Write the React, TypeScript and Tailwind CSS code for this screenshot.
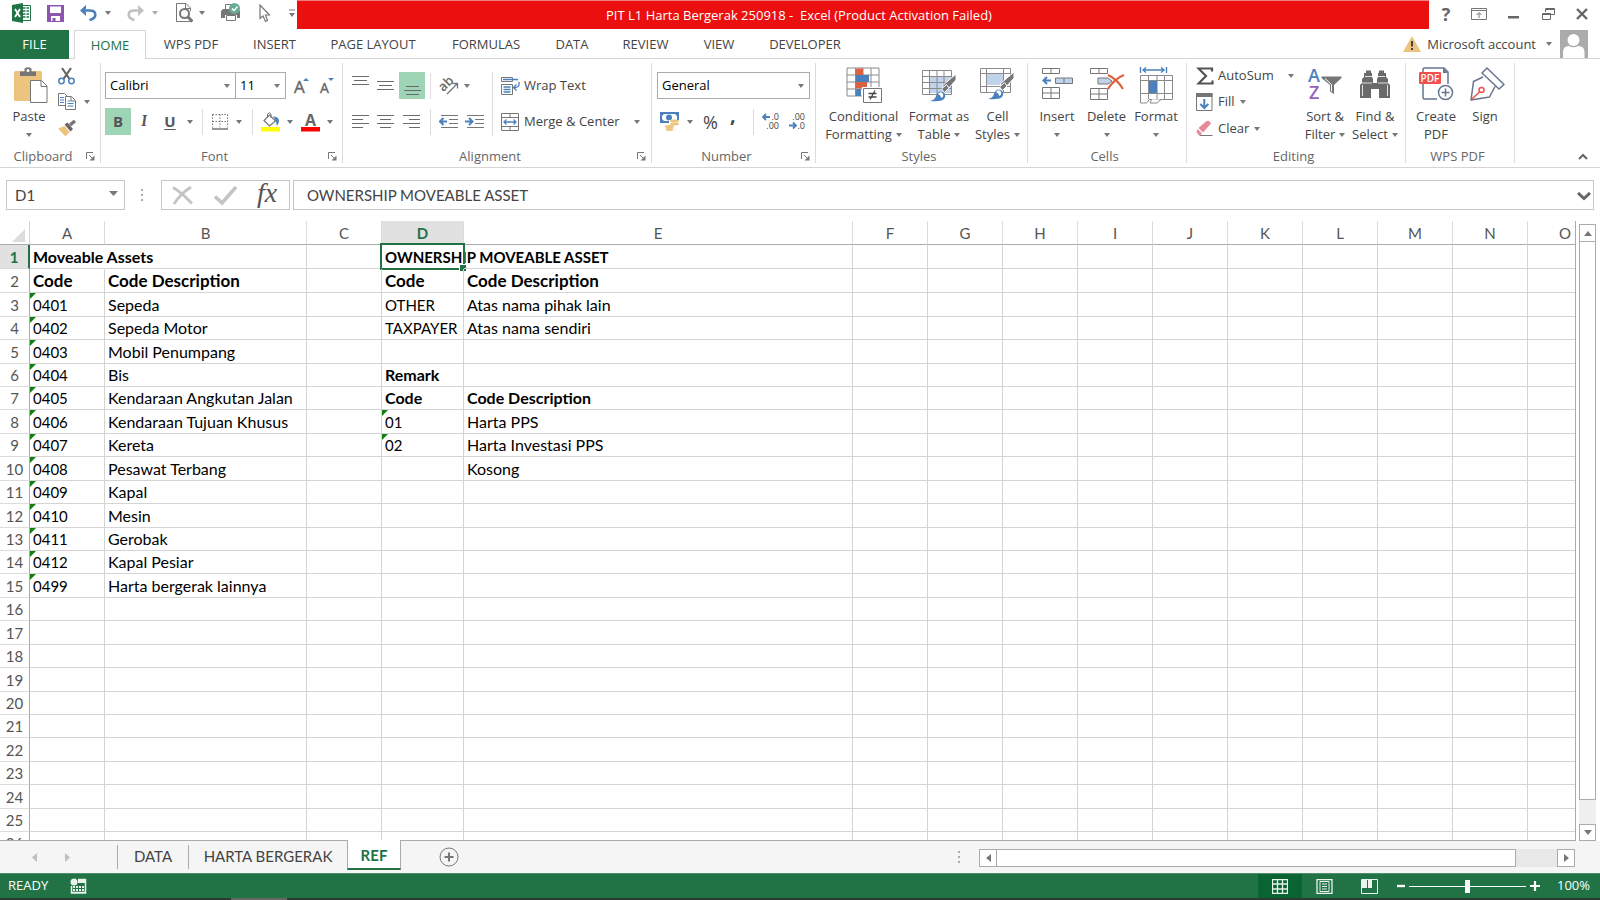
import { ReactNode } from "react";
import { clsx } from "clsx";

interface Tab {
    name: string;
    width: string;
}

interface Cell {
    text: string;
    bold?: boolean;
    size?: "small" | "large";
    flagged?: boolean;
}

const tabs: Tab[] = [
    { name: "WPS PDF", width: "w-[90px]" },
    { name: "INSERT", width: "w-[77px]" },
    { name: "PAGE LAYOUT", width: "w-[120px]" },
    { name: "FORMULAS", width: "w-[106px]" },
    { name: "DATA", width: "w-[66px]" },
    { name: "REVIEW", width: "w-[81px]" },
    { name: "VIEW", width: "w-[66px]" },
    { name: "DEVELOPER", width: "w-[106px]" },
];

const columns = [
    { name: "A", width: "w-[75px]" },
    { name: "B", width: "w-[202px]" },
    { name: "C", width: "w-[75px]" },
    { name: "D", width: "w-[82px]" },
    { name: "E", width: "w-[389px]" },
    { name: "F", width: "w-[75px]" },
    { name: "G", width: "w-[75px]" },
    { name: "H", width: "w-[75px]" },
    { name: "I", width: "w-[75px]" },
    { name: "J", width: "w-[75px]" },
    { name: "K", width: "w-[75px]" },
    { name: "L", width: "w-[75px]" },
    { name: "M", width: "w-[75px]" },
    { name: "N", width: "w-[75px]" },
    { name: "O", width: "w-[75px]" },
];

const assets = [
    ["0401", "Sepeda"],
    ["0402", "Sepeda Motor"],
    ["0403", "Mobil Penumpang"],
    ["0404", "Bis"],
    ["0405", "Kendaraan Angkutan Jalan"],
    ["0406", "Kendaraan Tujuan Khusus"],
    ["0407", "Kereta"],
    ["0408", "Pesawat Terbang"],
    ["0409", "Kapal"],
    ["0410", "Mesin"],
    ["0411", "Gerobak"],
    ["0412", "Kapal Pesiar"],
    ["0499", "Harta bergerak lainnya"],
];

const cells: Record<string, Cell> = {
    A1: { text: "Moveable Assets", bold: true },
    D1: { text: "OWNERSHIP MOVEABLE ASSET", bold: true, size: "small" },
    A2: { text: "Code", bold: true, size: "large" },
    B2: { text: "Code Description", bold: true, size: "large" },
    D2: { text: "Code", bold: true, size: "large" },
    E2: { text: "Code Description", bold: true, size: "large" },
    D3: { text: "OTHER", size: "small" },
    E3: { text: "Atas nama pihak lain" },
    D4: { text: "TAXPAYER", size: "small" },
    E4: { text: "Atas nama sendiri" },
    D6: { text: "Remark", bold: true },
    D7: { text: "Code", bold: true },
    E7: { text: "Code Description", bold: true },
    D8: { text: "01", size: "small", flagged: true },
    E8: { text: "Harta PPS" },
    D9: { text: "02", size: "small", flagged: true },
    E9: { text: "Harta Investasi PPS" },
    E10: { text: "Kosong" },
};
assets.forEach(([code, description], i) => {
    cells[`A${i + 3}`] = { text: code, size: "small", flagged: true };
    cells[`B${i + 3}`] = { text: description };
});

const rows = Array.from({ length: 26 }, (_, i) => i + 1);
const tallRows = [1, 2, 3, 5, 8, 10, 12, 15, 17, 19, 22, 24];

const Caret = ({ className = "" }: { className?: string }) => (
    <svg
        width="6"
        height="4"
        viewBox="0 0 6 4"
        className={clsx("shrink-0", className)}
    >
        <path d="M0 0h6L3 4z" fill="#777" />
    </svg>
);

const Launcher = () => (
    <button aria-label="More options" className="p-0">
        <svg width="9" height="9" viewBox="0 0 9 9" fill="none" stroke="#777">
            <path d="M.5 7V.5H7M3 3l4 4" />
            <path d="M8.5 3.5v5h-5z" fill="#777" stroke="none" />
        </svg>
    </button>
);

interface GroupProps {
    label: string;
    width: string;
    launcher?: boolean;
    children: ReactNode;
}

const Group = ({ label, width, launcher, children }: GroupProps) => (
    <section
        aria-label={label}
        className={clsx(
            "flex shrink-0 flex-col border-r border-[#dcdcdc]",
            width
        )}
    >
        <div className="h-[86px]">{children}</div>
        <div className="flex h-[14px] items-center pr-[5px]">
            <span className="flex-1 text-center leading-[14px] text-[#666]">
                {label}
            </span>
            {launcher && <Launcher />}
        </div>
    </section>
);

interface BigButtonProps {
    icon: ReactNode;
    lines: string[];
    width: string;
    caret?: "inline" | "below";
}

const BigButton = ({ icon, lines, width, caret }: BigButtonProps) => (
    <button
        className={clsx(
            "flex shrink-0 flex-col items-center whitespace-nowrap pt-1",
            width
        )}
    >
        <span className="flex h-[41px] items-start">{icon}</span>
        {lines.map((line, i) => (
            <span key={line} className="flex h-[18px] items-center gap-1">
                {line}
                {caret === "inline" && i === lines.length - 1 && <Caret />}
            </span>
        ))}
        {caret === "below" && <Caret className="mt-[7px]" />}
    </button>
);

const Divider = ({ className = "" }: { className?: string }) => (
    <span className={clsx("w-px bg-[#dcdcdc]", className)} />
);

/* quick access icons */

const ExcelIcon = () => (
    <svg width="19" height="20" viewBox="0 0 19 20">
        <path d="M10 2.5h8.500v15H10z" fill="#fff" stroke="#217346" />
        <path
            d="M11 5h2.500M14.500 5H17M11 8h2.500M14.500 8H17M11 11h2.500M14.500 11H17M11 14h2.500M14.500 14H17"
            stroke="#217346"
            strokeWidth="1.600"
        />
        <path d="M0 2l11-2v20L0 18z" fill="#217346" />
        <path d="M3 6l5 8M8 6l-5 8" stroke="#fff" strokeWidth="1.800" />
    </svg>
);

const SaveIcon = () => (
    <svg width="17" height="17" viewBox="0 0 17 17">
        <path d="M0 0h17v17H0z" fill="#8e55ae" />
        <path d="M3 1.500h11V8H3zM4 11h9v5H4z" fill="#fff" />
        <path d="M5.500 13h3v3h-3z" fill="#8e55ae" />
    </svg>
);

const UndoIcon = ({ color }: { color: string }) => (
    <svg width="17" height="17" viewBox="0 0 17 17" fill="none">
        <path d="M0 5.500L6 0v3.500L4.500 5.500 6 7.500V11z" fill={color} />
        <path
            d="M3 5.500h6.500C17 5.500 17.500 13 9.500 15"
            stroke={color}
            strokeWidth="2.600"
        />
    </svg>
);

const PreviewIcon = () => (
    <svg width="17" height="20" viewBox="0 0 17 20" fill="none" stroke="#767676">
        <path d="M14.500 8V5L10 .500H.500v18H15" />
        <path d="M9.500 1v4.500H14" />
        <circle cx="8.500" cy="10.500" r="4.500" strokeWidth="2" />
        <path d="M11.500 13.500l5 5" strokeWidth="3" />
    </svg>
);

const PrinterIcon = () => (
    <svg width="20" height="20" viewBox="0 0 20 20">
        <path d="M4.500 8V1.500h8" fill="#fff" stroke="#767676" />
        <path d="M2 6h15l2 2v7h-3v-3H4v3H0V8z" fill="#767676" />
        <path d="M5.500 12.500h9v5h-9z" fill="#fff" stroke="#767676" />
        <circle cx="13.500" cy="5.500" r="5.500" fill="#6aac93" />
        <path d="M11 5.500l2 2 3.500-4" fill="none" stroke="#fff" strokeWidth="1.500" />
    </svg>
);

const PointerIcon = () => (
    <svg width="12" height="19" viewBox="0 0 12 19">
        <path
            d="M1 1v13.500l3-2.500 2.500 5.500 2-1L6.500 11H10.500z"
            fill="#fff"
            stroke="#767676"
            strokeWidth="1.200"
        />
    </svg>
);

/* clipboard icons */

const PasteIcon = () => (
    <svg width="34" height="37" viewBox="0 0 34 37" className="ml-1">
        <rect y="4" width="28" height="30" rx="1.500" fill="#edc47d" />
        <path d="M6 9V4.500h4.500V1.500Q14 -1 17.500 1.500V4.500H22V9z" fill="#767676" />
        <circle cx="14" cy="3.500" r="1.500" fill="#fff" />
        <path
            d="M16.500 13.500h11l5.500 5.500v16.500H16.500z"
            fill="#fff"
            stroke="#767676"
        />
        <path d="M27 14v5.500h6" fill="none" stroke="#767676" />
    </svg>
);

const CutIcon = () => (
    <svg width="17" height="18" viewBox="0 0 17 18" fill="none">
        <path d="M4 1l7.500 11M13 1L5.500 12" stroke="#666" strokeWidth="2.200" />
        <circle cx="3.500" cy="14" r="2.700" stroke="#4a80bc" strokeWidth="1.500" />
        <circle cx="13.500" cy="14" r="2.700" stroke="#4a80bc" strokeWidth="1.500" />
    </svg>
);

const CopyIcon = () => (
    <svg width="18" height="17" viewBox="0 0 18 17" fill="#fff" stroke="#767676">
        <path d="M.500.500h6l3 3v9h-9z" />
        <path d="M2 4.500h4M2 7h4M2 9.500h4" stroke="#4a80bc" />
        <path d="M7.500 3.500h6l4 4v9h-10z" />
        <path d="M13 4v4h4" />
        <path d="M9.500 8h3M9.500 10.500h6M9.500 13h6" stroke="#4a80bc" />
    </svg>
);

const BrushIcon = () => (
    <svg width="19" height="17" viewBox="0 0 19 17">
        <path d="M0 8.500l6.500-2.500 5 6-4 4.500z" fill="#edc47d" />
        <path d="M6.500 4.500l3-2 5.500 6.500-2.500 2.500z" fill="#666" />
        <path d="M12 5l5-4" stroke="#767676" strokeWidth="3.500" />
    </svg>
);

/* font icons */

const GrowIcon = ({ shrink }: { shrink?: boolean }) => (
    <svg
        width="16"
        height="18"
        viewBox="0 0 16 18"
        className="overflow-visible"
    >
        <text
            x="0"
            y="16"
            fontSize={shrink ? 14 : 17}
            fontFamily="Open Sans, sans-serif"
            fill="#666"
            stroke="#666"
            strokeWidth=".4"
        >
            A
        </text>
        <path d={shrink ? "M8 1h6l-3 3z" : "M9 4l3-3 3 3z"} fill="#4a80bc" />
    </svg>
);

const BordersIcon = () => (
    <svg width="16" height="16" viewBox="0 0 16 16" stroke="#767676">
        <path
            d="M.500.500h15M.500 7.500h15M.500.500v13M8 .500v13M15.500.500v13"
            strokeDasharray="1.500 1.500"
        />
        <path d="M0 15h16" strokeWidth="1.500" />
    </svg>
);

const FillColorIcon = () => (
    <svg width="19" height="20" viewBox="0 0 19 20">
        <path
            d="M8.500 3l6 6-6 5L3 8.500z"
            fill="#fff"
            stroke="#767676"
            strokeWidth="1.200"
        />
        <path d="M6.500 6V2q2-2.500 3.500 0v4" fill="none" stroke="#767676" />
        <path d="M12 4.500q6 0 6 4.500 0 2.500-2.500 5 .5-5-3.500-9.500z" fill="#4a80bc" />
        <path d="M0 15h19v4.500H0z" fill="#ff0" />
    </svg>
);

const FontColorIcon = () => (
    <svg
        width="19"
        height="20"
        viewBox="0 0 19 20"
        className="overflow-visible"
    >
        <text
            x="9.500"
            y="14"
            fontSize="16"
            fontWeight="700"
            textAnchor="middle"
            fontFamily="Open Sans, sans-serif"
            fill="#666"
        >
            A
        </text>
        <path d="M0 15h19v4.500H0z" fill="#f00" />
    </svg>
);

/* alignment icons */

const LinesIcon = ({ d, height = 13 }: { d: string; height?: number }) => (
    <svg width="17" height={height} viewBox={`0 0 17 ${height}`} stroke="#6a6a6a">
        <path d={d} />
    </svg>
);

const OrientationIcon = () => (
    <svg
        width="19"
        height="18"
        viewBox="0 0 19 18"
        fill="none"
        className="overflow-visible"
    >
        <text
            x="0"
            y="13"
            fontSize="13"
            fontWeight="600"
            fontFamily="Open Sans, sans-serif"
            fill="#666"
            transform="rotate(-45 5 9)"
        >
            ab
        </text>
        <path d="M8 17L18 7M13.500 6.500h5v5" stroke="#767676" strokeWidth="1.300" />
    </svg>
);

const IndentIcon = ({ increase }: { increase?: boolean }) => (
    <svg width="19" height="13" viewBox="0 0 19 13" fill="none">
        <path d="M2 .500h17M10 4.500h9M10 8.500h9M2 12.500h17" stroke="#767676" />
        <path
            d={increase ? "M0 6.500h7M4 3l3.500 3.500L4 10" : "M1 6.500h7M4.500 3L1 6.500 4.500 10"}
            stroke="#4a80bc"
            strokeWidth="2"
        />
    </svg>
);

const WrapIcon = () => (
    <svg width="19" height="18" viewBox="0 0 19 18" fill="none">
        <path d="M.500.500h11v4H.500zM.500 7.500h11v10H.500z" stroke="#767676" />
        <path d="M2 2.500h15" stroke="#4a80bc" strokeWidth="1.500" />
        <path
            d="M2.500 10h7M2.500 12.500h7M2.500 15h7M18 5q1 6-5 5.500M15.500 7.500l-3 3 3 3"
            stroke="#4a80bc"
            strokeWidth="1.300"
        />
    </svg>
);

const MergeIcon = () => (
    <svg width="18" height="18" viewBox="0 0 18 18" fill="none">
        <path
            d="M.500.500h17v17H.500zM.500 4.500h17M.500 13.500h17M9 0v4.500M9 13.500V18"
            stroke="#767676"
        />
        <path
            d="M3 9h12M5.500 6.500L3 9l2.500 2.500M12.500 6.500L15 9l-2.500 2.500"
            stroke="#4a80bc"
            strokeWidth="1.300"
        />
    </svg>
);

/* number icons */

const CurrencyIcon = () => (
    <svg width="20" height="19" viewBox="0 0 20 19">
        <path d="M0 0h19v11H0z" fill="#4a80bc" />
        <path d="M2 2h15v7H2z" fill="#fff" />
        <circle cx="9" cy="5.500" r="3" fill="#4a80bc" />
        <path d="M2 2l2 0-2 2zM17 2v2l-2-2zM2 9V7l2 2z" fill="#4a80bc" />
        <path d="M9 8h11v6h-5v5H5v-6h4z" fill="#fff" />
        <g fill="#edc47d">
            <ellipse cx="14.500" cy="9" rx="4.500" ry="1.400" />
            <ellipse cx="14.500" cy="12" rx="4.500" ry="1.400" />
            <ellipse cx="9.500" cy="14.500" rx="4.500" ry="1.500" />
            <ellipse cx="9.500" cy="17.500" rx="4" ry="1.400" />
        </g>
    </svg>
);

const DecimalIcon = ({ increase }: { increase?: boolean }) => (
    <svg
        width="18"
        height="17"
        viewBox="0 0 18 17"
        fill="none"
        className="overflow-visible"
    >
        <g fontSize="9" fontFamily="Open Sans, sans-serif" fill="#444">
            <text x="17" y="7" textAnchor="end">
                {increase ? ".0" : ".00"}
            </text>
            <text x="17" y="16" textAnchor="end">
                {increase ? ".00" : ".0"}
            </text>
        </g>
        <path
            d={increase ? "M1 4h7M4 1L1 4l3 3" : "M1 12.500h7M5 9.500l3 3-3 3"}
            stroke="#4a80bc"
            strokeWidth="1.800"
        />
    </svg>
);

/* styles icons */

const ConditionalIcon = () => (
    <svg width="36" height="36" viewBox="0 0 36 36" fill="none">
        <path
            d="M1 1h32v28H1zM1 8h32M1 15h32M1 22h32M9.500 1v28M17 1v28M25 1v28"
            stroke="#8a8a8a"
        />
        <path d="M10 1.500h7V8h-7zM10 15h11v6.500H10z" fill="#dc6141" />
        <path d="M10 8h13v7H10zM10 22h5v7h-5z" fill="#4a80bc" />
        <path d="M16 20h20v16H16z" fill="#fff" />
        <path d="M17.500 21.500h18v14h-18z" fill="#fff" stroke="#767676" />
        <path d="M22.500 26.500h8M22.500 30h8M29 23.500l-5 9" stroke="#444" strokeWidth="1.300" />
    </svg>
);

const Paintbrush = () => (
    <>
        <path d="M34 7v6l-9 10-5-4z" fill="#767676" stroke="#fff" />
        <path d="M24.500 17.500l-5 4.500 3 3.500 4.500-4.500z" fill="#767676" stroke="#fff" />
        <path
            d="M8 34q5-1 6-5 2-6 7-4 4 3 1 7-3 3-14 2z"
            fill="#4a80bc"
        />
        <path d="M16 27q2-3 4.500-1 2 3-1 5-1-3-3.500-4z" fill="#fff" />
    </>
);

const FormatTableIcon = () => (
    <svg width="35" height="36" viewBox="0 0 35 36" fill="none">
        <path d="M8 9h21v17H8z" fill="#c0d3ea" />
        <path
            d="M.500 3.500h29v24H.500zM.500 9.500h29M.500 15.500h29M.500 21.500h29M7.500 3.500v24M15 3.500v24M22 3.500v24"
            stroke="#8a8a8a"
        />
        <Paintbrush />
    </svg>
);

const CellStylesIcon = () => (
    <svg width="35" height="36" viewBox="0 0 35 36" fill="none">
        <path d="M7 7h16v11H7z" fill="#c0d3ea" />
        <path
            d="M.500 1.500h30v24H.500zM.500 6.500h30M.500 19.500h30M6.500 1.500v24M23.500 1.500v24"
            stroke="#8a8a8a"
        />
        <g transform="translate(0 -2)">
            <Paintbrush />
        </g>
    </svg>
);

/* cells icons */

const InsertIcon = () => (
    <svg width="32" height="33" viewBox="0 0 32 33" fill="none" stroke="#767676">
        <path d="M1.500 1.500h17v5h-17zM10 1.500v5M1.500 20.500h17v11h-17zM1.500 26h17M10 20.500v11" />
        <path d="M14.500 11h17v5.500h-17zM23 11v5.500" fill="#c0d3ea" />
        <path d="M3 13.500h7M6 10l-3.500 3.500L6 17" stroke="#4a80bc" strokeWidth="2" />
    </svg>
);

const DeleteIcon = () => (
    <svg width="36" height="34" viewBox="0 0 36 34" fill="none" stroke="#767676">
        <path d="M1.500 1.500h17v5h-17zM10 1.500v5M1.500 21.500h17v11h-17zM1.500 27h17M10 21.500v11" />
        <path d="M9 11h10l4 3-4 3H9z" fill="#c0d3ea" />
        <path
            d="M19 8q9 4 15 14M35 8Q25 12 19 22"
            stroke="#dc6141"
            strokeWidth="2.200"
        />
    </svg>
);

const FormatIcon = () => (
    <svg width="34" height="37" viewBox="0 0 34 37" fill="none" stroke="#8a8a8a">
        <path d="M1.500 8.500h32v24h-32zM1.500 13.500h32M1.500 26.500h32M9.500 8.500v24M18 8.500v5M18 26.500v6M25.500 8.500v24" />
        <path d="M1.500 32v4h6l3-3.500h2l-1.500 3.500h7l4-3.500" fill="#fff" />
        <path d="M10 14h8.500v12H10z" fill="#4a80bc" stroke="none" />
        <path
            d="M1.500 0v6M27.500 0v6M4 3h21M7 .500L4 3l3 2.500M22 .500L25 3l-3 2.500"
            stroke="#4a80bc"
            strokeWidth="1.400"
        />
    </svg>
);

/* editing icons */

const SigmaIcon = () => (
    <svg width="18" height="18" viewBox="0 0 18 18" fill="none">
        <path
            d="M16 4.500V1.500H2.500L10 9l-7.500 7.500H16.500v-3"
            stroke="#555"
            strokeWidth="2.200"
        />
    </svg>
);

const FillIcon = () => (
    <svg width="17" height="18" viewBox="0 0 17 18" fill="none">
        <path d="M.500.500h15.500v17H.500z" stroke="#767676" />
        <path d="M0 0h16.500v4H0z" fill="#767676" />
        <path d="M8.300 6v9M4.300 11l4 4 4-4" stroke="#4a80bc" strokeWidth="2" />
    </svg>
);

const EraserIcon = () => (
    <svg width="17" height="17" viewBox="0 0 17 17" fill="none">
        <path d="M10 1.500q2-1.500 3.500 0l1.500 2L7 12.500 2.500 8z" fill="#e8899b" />
        <path d="M1.500 9L6 13.500 4.500 15H2.500L.500 12z" fill="#e8899b" />
        <path d="M3.500 15.500h13" stroke="#767676" />
    </svg>
);

const SortIcon = () => (
    <svg
        width="34"
        height="34"
        viewBox="0 0 34 34"
        className="overflow-visible"
    >
        <g
            fontSize="18"
            fontWeight="600"
            fontFamily="Open Sans, sans-serif"
        >
            <text x="0" y="15" fill="#4a80bc">
                A
            </text>
            <text x="1" y="32" fill="#9560b8">
                Z
            </text>
        </g>
        <path d="M13.500 9.500h20v1.500l-7.500 7v9l-4-2.500V18l-8.500-7z" fill="#767676" />
        <path d="M17 11.500l6.500 6v7" fill="none" stroke="#fff" />
    </svg>
);

const BinocularsIcon = () => (
    <svg width="32" height="32" viewBox="0 0 32 32" fill="#6a6a6a">
        <path d="M1 31V18l2-2v-4l2-2V6h2V3.500h5V6h1v4l1 2v4h4v-4l1-2V6h1V3.500h5V6h2v4l2 2v4l2 2v13H20V22h-8v9z" />
        <path
            d="M6 9.500h7M19 9.500h7M3 16h10M19 16h10M3.500 18v11M28.500 18v11"
            stroke="#fff"
            strokeWidth=".8"
        />
    </svg>
);

const CreatePdfIcon = () => (
    <svg
        width="35"
        height="35"
        viewBox="0 0 35 35"
        fill="none"
        className="overflow-visible"
    >
        <path
            d="M4 5V2.500Q4 1 5.500 1H25l4 4v12M4 17v13.500Q4 32 5.500 32H18"
            stroke="#66758f"
            strokeWidth="1.500"
        />
        <path d="M24 1l5 5h-5z" fill="#66758f" />
        <rect y="5" width="22" height="12" rx="1" fill="#f0504e" />
        <text
            x="11"
            y="14.500"
            fontSize="10"
            fontWeight="600"
            textAnchor="middle"
            fontFamily="Open Sans, sans-serif"
            fill="#fff"
        >
            PDF
        </text>
        <circle cx="26.500" cy="25.500" r="7" fill="#fff" stroke="#66758f" strokeWidth="1.500" />
        <path d="M22.500 25.500h8M26.500 21.500v8" stroke="#66758f" strokeWidth="1.500" />
    </svg>
);

const SignIcon = () => (
    <svg
        width="35"
        height="35"
        viewBox="0 0 35 35"
        fill="none"
        strokeWidth="1.500"
        className="ml-1"
    >
        <path
            d="M17 1L34 17.500l-5 4.500L12 6zM13 10L3.500 14.500 1 33l18.500-3L25 19.500"
            stroke="#66758f"
            strokeLinejoin="round"
        />
        <path d="M1.500 32.500L10 24.500" stroke="#f0504e" />
        <circle cx="11.500" cy="23" r="2.500" stroke="#f0504e" />
    </svg>
);

const TitleBar = () => (
    <header className="flex h-[30px] items-start justify-between">
        <div className="flex h-[26px] w-[297px] shrink-0 items-center pl-3">
            <button aria-label="Excel">
                <ExcelIcon />
            </button>
            <button aria-label="Save" className="ml-4">
                <SaveIcon />
            </button>
            <button aria-label="Undo" className="ml-4 flex items-center gap-2">
                <UndoIcon color="#4a80bc" />
                <Caret />
            </button>
            <button
                aria-label="Redo"
                className="ml-4 flex items-center gap-2 opacity-60"
            >
                <span className="-scale-x-100">
                    <UndoIcon color="#999" />
                </span>
                <Caret />
            </button>
            <button
                aria-label="Print preview"
                className="ml-[18px] flex items-center gap-[6px]"
            >
                <PreviewIcon />
                <Caret />
            </button>
            <button aria-label="Print" className="ml-4">
                <PrinterIcon />
            </button>
            <button aria-label="Pointer" className="ml-[18px]">
                <PointerIcon />
            </button>
            <button aria-label="Customize toolbar" className="ml-[18px]">
                <svg width="6" height="9" viewBox="0 0 6 9">
                    <path d="M0 1h6" stroke="#777" />
                    <path d="M0 4h6L3 8z" fill="#777" />
                </svg>
            </button>
        </div>
        <h1 className="h-[29px] flex-1 whitespace-pre border-t border-[#f08080] bg-[#eb0f0f] pr-32 text-center text-[13px] leading-[28px] text-white">
            PIT L1 Harta Bergerak 250918 -{"  "}Excel (Product Activation Failed)
        </h1>
        <div className="flex h-[27px] w-[171px] shrink-0 items-center justify-end gap-5 pr-3 text-[#666]">
            <button aria-label="Help" className="w-[10px] text-lg font-bold leading-5">
                ?
            </button>
            <button aria-label="Ribbon display options">
                <svg width="16" height="12" viewBox="0 0 16 12" fill="none" stroke="#777">
                    <path d="M.500.500h15v11H.500zM0 2.500h16M8 10V5M5.500 7L8 4.500 10.500 7" />
                </svg>
            </button>
            <button aria-label="Minimize">
                <svg width="12" height="12" viewBox="0 0 12 12">
                    <path d="M1 8h11v2.500H1z" fill="#666" />
                </svg>
            </button>
            <button aria-label="Restore" className="ml-[3px]">
                <svg width="13" height="12" viewBox="0 0 13 12" fill="none" stroke="#666">
                    <path d="M3.500 4V.500h9v6H9M3 1.500h10" />
                    <path d="M.500 5.500h8v6h-8zM0 6.500h9" />
                </svg>
            </button>
            <button aria-label="Close" className="ml-px">
                <svg width="12" height="12" viewBox="0 0 12 12">
                    <path d="M1 1l10 10M11 1L1 11" stroke="#666" strokeWidth="2.400" />
                </svg>
            </button>
        </div>
    </header>
);

const TabBar = () => (
    <nav className="flex h-[29px] border-b border-[#d5d5d5] text-[13px] leading-[27px]">
        <button className="h-[29px] w-[69px] shrink-0 bg-[#217346] text-white">
            FILE
        </button>
        <button className="ml-[5px] h-[29px] w-[72px] shrink-0 border-x border-t border-[#d5d5d5] bg-white text-[#217346]">
            HOME
        </button>
        {tabs.map((tab) => (
            <button key={tab.name} className={clsx("shrink-0", tab.width)}>
                {tab.name}
            </button>
        ))}
        <div className="ml-auto flex items-center pr-3">
            <svg width="18" height="16" viewBox="0 0 18 16">
                <path d="M9 0l9 16H0z" fill="#edc47d" />
                <path d="M9 5v5.500M9 12v2" stroke="#444" strokeWidth="2" />
            </svg>
            <button className="ml-[6px] flex items-center gap-[10px]">
                Microsoft account
                <Caret />
            </button>
            <svg width="28" height="28" viewBox="0 0 28 28" className="ml-2">
                <path d="M0 0h28v28H0z" fill="#ababab" />
                <circle cx="13.500" cy="10" r="6" fill="#fff" />
                <path d="M3 28V22q0-6 6-6 4.500 2.500 9 0 6.500 0 6.500 6v6z" fill="#fff" />
            </svg>
        </div>
    </nav>
);

const comboBox =
    "h-[27px] w-full appearance-none border border-[#ababab] bg-white pl-1 text-[13px] text-black";

const Ribbon = () => (
    <div className="flex h-[109px] border-b border-[#d5d5d5] pb-1 pt-1">
        <Group label="Clipboard" width="w-[101px]" launcher>
            <div className="flex pl-2">
                <BigButton
                    icon={<PasteIcon />}
                    lines={["Paste"]}
                    width="w-[42px]"
                    caret="below"
                />
                <div className="ml-2 flex flex-col">
                    <button
                        aria-label="Cut"
                        className="flex h-[25px] items-center"
                    >
                        <CutIcon />
                    </button>
                    <button
                        aria-label="Copy"
                        className="flex h-[27px] items-center gap-2"
                    >
                        <CopyIcon />
                        <Caret />
                    </button>
                    <button
                        aria-label="Format painter"
                        className="flex h-[27px] items-center"
                    >
                        <BrushIcon />
                    </button>
                </div>
            </div>
        </Group>
        <Group label="Font" width="w-[242px]" launcher>
            <div className="flex items-center pl-1 pt-[9px]">
                <label className="relative w-[131px]">
                    <select aria-label="Font" className={comboBox}>
                        <option>Calibri</option>
                    </select>
                    <Caret className="absolute right-[6px] top-3" />
                </label>
                <label className="relative -ml-px w-[51px]">
                    <select aria-label="Font size" className={comboBox}>
                        <option>11</option>
                    </select>
                    <Caret className="absolute right-[6px] top-3" />
                </label>
                <button aria-label="Increase font size" className="ml-2">
                    <GrowIcon />
                </button>
                <button aria-label="Decrease font size" className="ml-[10px]">
                    <GrowIcon shrink />
                </button>
            </div>
            <div className="flex items-center pl-1 pt-[9px] text-[15px] font-bold leading-[27px] text-[#555]">
                <button className="w-[26px] bg-[#9fd5b7]">B</button>
                <button className="w-[26px] font-serif italic">I</button>
                <button className="w-[26px] underline underline-offset-2">
                    U
                </button>
                <Caret className="ml-1" />
                <Divider className="ml-[9px] h-[26px]" />
                <button
                    aria-label="Borders"
                    className="ml-[9px] flex items-center gap-2"
                >
                    <BordersIcon />
                    <Caret />
                </button>
                <Divider className="ml-[10px] h-[26px]" />
                <button
                    aria-label="Fill color"
                    className="ml-2 flex items-center gap-[7px]"
                >
                    <FillColorIcon />
                    <Caret />
                </button>
                <button
                    aria-label="Font color"
                    className="ml-2 flex items-center gap-[7px]"
                >
                    <FontColorIcon />
                    <Caret />
                </button>
            </div>
        </Group>
        <Group label="Alignment" width="w-[309px]" launcher>
            <div className="flex pl-[9px] pt-[9px]">
                <div className="w-[140px]">
                    <div className="flex h-[27px] items-center">
                        <button aria-label="Top align">
                            <LinesIcon height={19} d="M0 .500h17M2 4.500h13M0 8.500h17" />
                        </button>
                        <button aria-label="Middle align" className="ml-2">
                            <LinesIcon height={19} d="M0 5.500h17M2 9.500h13M0 13.500h17" />
                        </button>
                        <button
                            aria-label="Bottom align"
                            className="ml-[5px] flex h-[27px] w-[26px] items-center justify-center bg-[#9fd5b7]"
                        >
                            <LinesIcon height={19} d="M2 10.500h13M0 14.500h17M2 18.500h13" />
                        </button>
                        <Divider className="ml-[5px] h-[26px]" />
                        <button
                            aria-label="Orientation"
                            className="ml-2 flex items-center gap-[6px]"
                        >
                            <OrientationIcon />
                            <Caret />
                        </button>
                    </div>
                    <div className="mt-[9px] flex h-[27px] items-center">
                        <button aria-label="Align left">
                            <LinesIcon d="M0 .500h17M0 4.500h11M0 8.500h17M0 12.500h11" />
                        </button>
                        <button aria-label="Center" className="ml-2">
                            <LinesIcon d="M0 .500h17M3 4.500h11M0 8.500h17M3 12.500h11" />
                        </button>
                        <button aria-label="Align right" className="ml-[9px]">
                            <LinesIcon d="M0 .500h17M6 4.500h11M0 8.500h17M6 12.500h11" />
                        </button>
                        <Divider className="ml-[10px] h-[26px]" />
                        <button aria-label="Decrease indent" className="ml-2">
                            <IndentIcon />
                        </button>
                        <button aria-label="Increase indent" className="ml-[7px]">
                            <IndentIcon increase />
                        </button>
                    </div>
                </div>
                <Divider className="h-16" />
                <div className="pl-2">
                    <button className="flex h-[27px] items-center gap-1">
                        <WrapIcon />
                        Wrap Text
                    </button>
                    <button className="mt-[9px] flex h-[27px] items-center gap-[5px]">
                        <MergeIcon />
                        Merge &amp; Center
                        <Caret className="ml-[9px]" />
                    </button>
                </div>
            </div>
        </Group>
        <Group label="Number" width="w-[164px]" launcher>
            <div className="px-[5px] pt-[9px]">
                <label className="relative block">
                    <select aria-label="Number format" className={comboBox}>
                        <option>General</option>
                    </select>
                    <Caret className="absolute right-[6px] top-3" />
                </label>
                <div className="mt-[9px] flex h-[27px] items-center pl-[3px]">
                    <button
                        aria-label="Accounting format"
                        className="flex items-center gap-[7px]"
                    >
                        <CurrencyIcon />
                        <Caret />
                    </button>
                    <button className="ml-[10px] text-lg leading-5">%</button>
                    <button
                        aria-label="Comma style"
                        className="ml-3 pb-[14px] text-xl font-bold leading-5"
                    >
                        ,
                    </button>
                    <Divider className="ml-auto h-[26px]" />
                    <button aria-label="Increase decimal" className="ml-2">
                        <DecimalIcon increase />
                    </button>
                    <button aria-label="Decrease decimal" className="ml-2 mr-1">
                        <DecimalIcon />
                    </button>
                </div>
            </div>
        </Group>
        <Group label="Styles" width="w-[212px]">
            <div className="flex pl-[5px]">
                <BigButton
                    icon={<ConditionalIcon />}
                    lines={["Conditional", "Formatting"]}
                    width="w-[85px]"
                    caret="inline"
                />
                <BigButton
                    icon={<FormatTableIcon />}
                    lines={["Format as", "Table"]}
                    width="w-[66px]"
                    caret="inline"
                />
                <BigButton
                    icon={<CellStylesIcon />}
                    lines={["Cell", "Styles"]}
                    width="w-[51px]"
                    caret="inline"
                />
            </div>
        </Group>
        <Group label="Cells" width="w-[159px]">
            <div className="flex pl-1">
                <BigButton
                    icon={<InsertIcon />}
                    lines={["Insert"]}
                    width="w-[50px]"
                    caret="below"
                />
                <BigButton
                    icon={<DeleteIcon />}
                    lines={["Delete"]}
                    width="w-[49px]"
                    caret="below"
                />
                <BigButton
                    icon={<FormatIcon />}
                    lines={["Format"]}
                    width="w-[50px]"
                    caret="below"
                />
            </div>
        </Group>
        <Group label="Editing" width="w-[219px]">
            <div className="flex pl-[9px]">
                <div className="flex w-[104px] flex-col">
                    <button className="flex h-[25px] items-center gap-1">
                        <SigmaIcon />
                        AutoSum
                        <Caret className="ml-[10px]" />
                    </button>
                    <button className="flex h-[27px] items-center gap-[5px]">
                        <FillIcon />
                        Fill
                        <Caret />
                    </button>
                    <button className="flex h-[27px] items-center gap-[5px]">
                        <EraserIcon />
                        Clear
                        <Caret />
                    </button>
                </div>
                <BigButton
                    icon={<SortIcon />}
                    lines={["Sort &", "Filter"]}
                    width="w-[50px]"
                    caret="inline"
                />
                <BigButton
                    icon={<BinocularsIcon />}
                    lines={["Find &", "Select"]}
                    width="w-[50px]"
                    caret="inline"
                />
            </div>
        </Group>
        <Group label="WPS PDF" width="w-[109px]">
            <div className="flex pl-[5px]">
                <BigButton
                    icon={<CreatePdfIcon />}
                    lines={["Create", "PDF"]}
                    width="w-[50px]"
                />
                <BigButton
                    icon={<SignIcon />}
                    lines={["Sign"]}
                    width="w-[48px]"
                />
            </div>
        </Group>
        <button
            aria-label="Collapse ribbon"
            className="ml-auto self-end pb-[3px] pr-3"
        >
            <svg width="10" height="7" viewBox="0 0 10 7" fill="none">
                <path d="M1 6l4-4 4 4" stroke="#666" strokeWidth="2" />
            </svg>
        </button>
    </div>
);

const FormulaBar = () => (
    <div className="flex h-[53px] shrink-0 items-start pl-[6px] pr-[6px] pt-3 font-[Lato,sans-serif] text-[15px] text-[#444]">
        <label className="relative w-[119px] shrink-0">
            <input
                aria-label="Name box"
                defaultValue="D1"
                className="h-[30px] w-full border border-[#c6c6c6] pl-2"
            />
            <svg
                width="9"
                height="5"
                viewBox="0 0 9 5"
                className="absolute right-[7px] top-[11px]"
            >
                <path d="M0 0h9L4.500 5z" fill="#777" />
            </svg>
        </label>
        <svg width="3" height="13" viewBox="0 0 3 13" className="ml-4 mt-[9px]">
            <path d="M0 0h2v2H0zM0 5h2v2H0zM0 10h2v2H0z" fill="#ababab" />
        </svg>
        <div className="ml-[17px] flex h-[30px] w-[129px] shrink-0 items-center border border-[#c6c6c6] pl-[10px]">
            <button aria-label="Cancel">
                <svg width="21" height="19" viewBox="0 0 21 19">
                    <path
                        d="M1 1.500Q9 6 20 17.500M19 1Q8 8 2 18"
                        fill="none"
                        stroke="#c4c4c4"
                        strokeWidth="2.800"
                    />
                </svg>
            </button>
            <button aria-label="Enter" className="ml-[21px]">
                <svg width="23" height="19" viewBox="0 0 23 19">
                    <path
                        d="M1 10.500L8 17 22 1"
                        fill="none"
                        stroke="#c4c4c4"
                        strokeWidth="3.600"
                    />
                </svg>
            </button>
            <button
                aria-label="Insert function"
                className="ml-5 pb-1 font-['Liberation_Serif',serif] text-[28px] italic leading-6 text-[#555]"
            >
                fx
            </button>
        </div>
        <label className="relative ml-[3px] flex-1">
            <input
                aria-label="Formula"
                defaultValue="OWNERSHIP MOVEABLE ASSET"
                className="h-[30px] w-full border border-[#c6c6c6] pl-[13px]"
            />
            <svg
                width="14"
                height="9"
                viewBox="0 0 14 9"
                className="absolute right-[3px] top-3"
            >
                <path d="M1 1l6 5.500L13 1" fill="none" stroke="#666" strokeWidth="3" />
            </svg>
        </label>
    </div>
);

const SheetCell = ({ id }: { id: string }) => {
    const cell = cells[id];
    return (
        <td
            className={clsx(
                "relative whitespace-nowrap border-b border-r border-[#d4d4d4] p-0 pl-[3px] leading-5",
                cell?.bold && "font-bold",
                cell?.size === "small" && "text-[15px]",
                cell?.size === "large" && "text-[17px]",
                id === "A1" && "border-r-transparent"
            )}
        >
            {cell?.text}
            {cell?.flagged && (
                <svg
                    width="6"
                    height="6"
                    viewBox="0 0 6 6"
                    className="absolute left-0 top-0"
                >
                    <path d="M0 0h6L0 6z" fill="#118011" />
                </svg>
            )}
            {id === "D1" && (
                <span className="absolute -bottom-[2px] -left-[2px] -right-[2px] -top-[2px] border-2 border-[#217346]">
                    <span className="absolute -bottom-[3px] -right-[3px] size-[7px] border-l border-t border-white bg-[#217346]" />
                </span>
            )}
        </td>
    );
};

const Sheet = () => (
    <div className="flex min-h-0 flex-1">
        <div className="min-w-0 flex-1 overflow-hidden border-b border-r border-[#ababab]">
            <table className="w-[1600px] table-fixed border-separate border-spacing-0 font-[Lato,sans-serif] text-base text-black">
                <colgroup>
                    <col className="w-[30px]" />
                    {columns.map((column) => (
                        <col key={column.name} className={column.width} />
                    ))}
                </colgroup>
                <thead>
                    <tr className="h-6 text-[15px] text-[#555]">
                        <th className="border-b border-r border-b-[#ababab] border-r-[#d4d4d4] p-0">
                            <svg
                                width="13"
                                height="13"
                                viewBox="0 0 13 13"
                                className="ml-auto mr-1 mt-[6px]"
                            >
                                <path d="M13 0v13H0z" fill="#dcdcdc" />
                            </svg>
                        </th>
                        {columns.map((column) => (
                            <th
                                key={column.name}
                                className={clsx(
                                    "border-b border-r border-b-[#ababab] border-r-[#dcdcdc] p-0 leading-5",
                                    column.name === "D"
                                        ? "bg-[#e1e1e1] font-bold text-[#217346]"
                                        : "font-normal"
                                )}
                            >
                                {column.name}
                            </th>
                        ))}
                    </tr>
                </thead>
                <tbody>
                    {rows.map((row) => (
                        <tr
                            key={row}
                            className={
                                tallRows.includes(row) ? "h-6" : "h-[23px]"
                            }
                        >
                            <th
                                className={clsx(
                                    "border-b border-r border-b-[#dcdcdc] p-0 text-[15px] leading-5",
                                    row === 1
                                        ? "border-r-2 border-r-[#217346] bg-[#e1e1e1] font-bold text-[#217346]"
                                        : "border-r-[#ababab] font-normal text-[#555]"
                                )}
                            >
                                {row}
                            </th>
                            {columns.map((column) => (
                                <SheetCell
                                    key={column.name}
                                    id={`${column.name}${row}`}
                                />
                            ))}
                        </tr>
                    ))}
                </tbody>
            </table>
        </div>
        <div className="ml-[3px] mr-1 mt-[3px] flex w-[17px] flex-col bg-[#f0f0f0]">
            <button
                aria-label="Scroll up"
                className="flex h-[18px] items-center justify-center border border-[#ababab] bg-white"
            >
                <svg width="8" height="5" viewBox="0 0 8 5">
                    <path d="M0 5h8L4 0z" fill="#777" />
                </svg>
            </button>
            <div className="-mt-px flex-1 border border-[#ababab] bg-white" />
            <button
                aria-label="Scroll down"
                className="mt-6 flex h-[17px] items-center justify-center border border-[#ababab] bg-white"
            >
                <svg width="8" height="5" viewBox="0 0 8 5">
                    <path d="M0 0h8L4 5z" fill="#777" />
                </svg>
            </button>
        </div>
    </div>
);

const SheetTabs = () => (
    <div className="flex h-8 shrink-0 items-start bg-[#f5f5f5] font-[Lato,sans-serif] text-[15px] leading-[31px] text-[#444]">
        <div className="flex h-8 w-[117px] items-center gap-7 pl-8">
            <button aria-label="Previous sheet">
                <svg width="5" height="9" viewBox="0 0 5 9">
                    <path d="M5 0v9L0 4.500z" fill="#c0c0c0" />
                </svg>
            </button>
            <button aria-label="Next sheet">
                <svg width="5" height="9" viewBox="0 0 5 9">
                    <path d="M0 0v9l5-4.500z" fill="#c0c0c0" />
                </svg>
            </button>
        </div>
        <span className="mt-1 h-6 w-px bg-[#ababab]" />
        <button className="w-[70px]">DATA</button>
        <span className="mt-1 h-6 w-px bg-[#ababab]" />
        <button className="w-[158px]">HARTA BERGERAK</button>
        <button className="-mt-px h-[30px] w-[54px] border-x border-b-2 border-x-[#ababab] border-b-[#217346] bg-white font-bold leading-[31px] text-[#217346]">
            REF
        </button>
        <button aria-label="New sheet" className="ml-[38px] mt-[6px]">
            <svg width="20" height="20" viewBox="0 0 20 20" fill="none" stroke="#777">
                <circle cx="10" cy="10" r="9" />
                <path d="M5.500 10h9M10 5.500v9" strokeWidth="2" />
            </svg>
        </button>
        <svg width="3" height="13" viewBox="0 0 3 13" className="ml-auto mt-[10px]">
            <path d="M0 0h2v2H0zM0 5h2v2H0zM0 10h2v2H0z" fill="#ababab" />
        </svg>
        <div className="ml-[18px] mr-[25px] mt-2 flex h-[18px] w-[596px] bg-[#e8e8e8]">
            <button
                aria-label="Scroll left"
                className="flex w-[18px] items-center justify-center border border-[#ababab] bg-white"
            >
                <svg width="5" height="8" viewBox="0 0 5 8">
                    <path d="M5 0v8L0 4z" fill="#777" />
                </svg>
            </button>
            <div className="-ml-px mr-[41px] flex-1 border border-[#ababab] bg-white" />
            <button
                aria-label="Scroll right"
                className="flex w-[18px] items-center justify-center border border-[#ababab] bg-white"
            >
                <svg width="5" height="8" viewBox="0 0 5 8">
                    <path d="M0 0v8l5-4z" fill="#777" />
                </svg>
            </button>
        </div>
    </div>
);

const StatusBar = () => (
    <footer className="shrink-0">
        <div className="flex h-[25px] items-center border-t border-[#4f8f6d] bg-[#217346] pl-2 text-[13px] text-white">
            <span>READY</span>
            <button aria-label="Record macro" className="ml-[22px]">
                <svg width="17" height="16" viewBox="0 0 17 16" fill="none">
                    <path d="M8 1.500h8M15.500 1v14h-14V8M1.500 14.500h14" stroke="#e9f3ed" strokeWidth="1.500" />
                    <path d="M8 2h8v3H8z" fill="#e9f3ed" />
                    <path
                        d="M3 9h11M3 12h11"
                        stroke="#e9f3ed"
                        strokeWidth="1.800"
                        strokeDasharray="2 1"
                    />
                    <circle cx="4" cy="4" r="3.500" fill="#e9f3ed" />
                </svg>
            </button>
            <button
                aria-label="Normal view"
                className="ml-auto flex h-6 w-11 items-center justify-center bg-[#0a6332]"
            >
                <svg width="16" height="15" viewBox="0 0 16 15" fill="none">
                    <path
                        d="M.500.500h15v14H.500zM.500 5h15M.500 10h15M5.500.500v14M10.500.500v14"
                        stroke="#e9f3ed"
                        strokeWidth="1.300"
                    />
                </svg>
            </button>
            <button
                aria-label="Page layout view"
                className="flex h-6 w-[45px] items-center justify-center"
            >
                <svg width="17" height="15" viewBox="0 0 17 15" fill="none" stroke="#e9f3ed">
                    <path d="M1 .500h15v14H1z" strokeWidth="1.300" />
                    <path d="M4 2.500h9v10H4zM6 5h5M6 7.500h5M6 10h5" />
                </svg>
            </button>
            <button
                aria-label="Page break view"
                className="flex h-6 w-[45px] items-center justify-center"
            >
                <svg width="17" height="15" viewBox="0 0 17 15">
                    <path d="M.500.500h16v14H.500z" fill="none" stroke="#e9f3ed" />
                    <path d="M1 0h5v9H1zM7 0h4v9H7z" fill="#e9f3ed" />
                </svg>
            </button>
            <button aria-label="Zoom out" className="ml-[5px]">
                <svg width="8" height="10" viewBox="0 0 8 10">
                    <path d="M0 5h8" stroke="#fff" strokeWidth="2.400" />
                </svg>
            </button>
            <input
                type="range"
                aria-label="Zoom"
                min="10"
                max="190"
                defaultValue="100"
                className="ml-1 h-4 w-[117px] appearance-none bg-transparent [&::-webkit-slider-runnable-track]:h-px [&::-webkit-slider-runnable-track]:bg-white [&::-webkit-slider-thumb]:-mt-[6px] [&::-webkit-slider-thumb]:h-[13px] [&::-webkit-slider-thumb]:w-[5px] [&::-webkit-slider-thumb]:appearance-none [&::-webkit-slider-thumb]:bg-white"
            />
            <button aria-label="Zoom in" className="ml-1">
                <svg width="10" height="10" viewBox="0 0 10 10">
                    <path d="M0 5h10M5 0v10" stroke="#fff" strokeWidth="2.200" />
                </svg>
            </button>
            <button className="w-[60px] pr-[10px] text-right">100%</button>
        </div>
        <div className="h-[2px] bg-[#2b3a33] pl-[231px]">
            <div className="h-[2px] w-14 bg-[#666]" />
        </div>
    </footer>
);

const App = () => {
    return (
        <div className="flex h-screen flex-col overflow-hidden bg-white font-['Open_Sans',sans-serif] text-[13px] text-[#444]">
            <TitleBar />
            <TabBar />
            <Ribbon />
            <FormulaBar />
            <Sheet />
            <SheetTabs />
            <StatusBar />
        </div>
    );
};

export default App;
